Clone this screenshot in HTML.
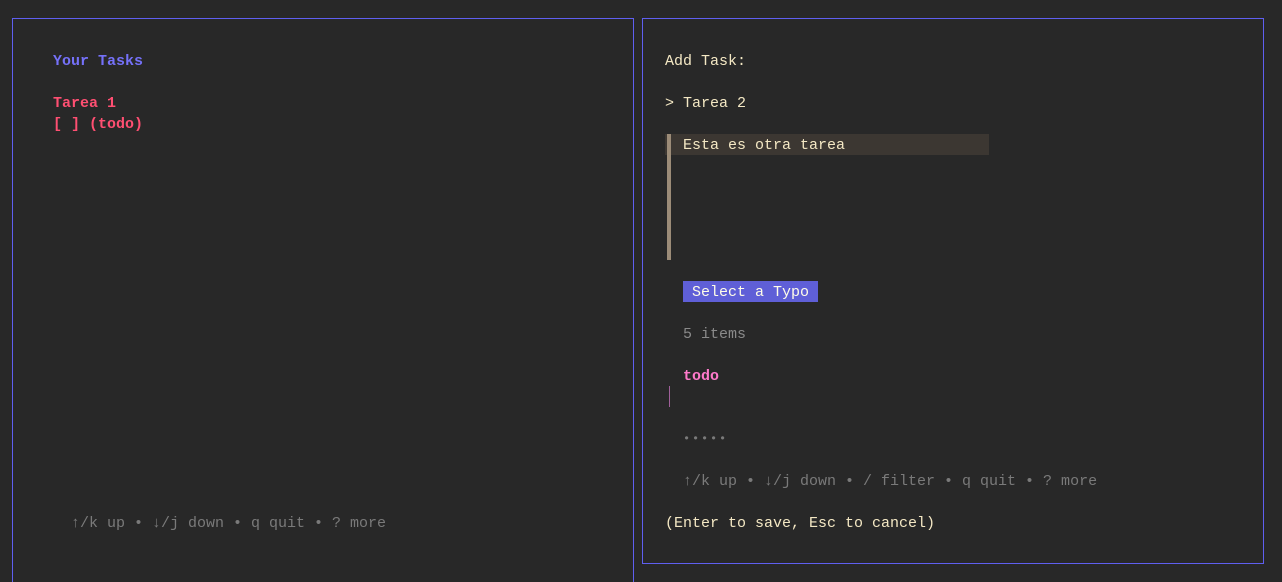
<!DOCTYPE html>
<html><head><meta charset="utf-8"><style>
html,body{margin:0;padding:0;background:#282828;width:1282px;height:582px;overflow:hidden}
body{position:relative;font-family:"Liberation Mono","DejaVu Sans Mono",monospace;font-size:15px}
.box{position:absolute;border:1px solid #5f5ff0;box-sizing:border-box}
.t{position:absolute;white-space:pre;line-height:21px;height:21px}
</style></head><body>
<div class="box" style="left:12px;top:18px;width:622px;height:564px;border-bottom:none"></div>
<div class="box" style="left:642px;top:18px;width:622px;height:546px"></div>

<div class="t" style="left:53px;top:51px;color:#7571f9;font-weight:bold">Your Tasks</div>
<div class="t" style="left:53px;top:93px;color:#ff4f72;font-weight:bold">Tarea 1</div>
<div class="t" style="left:53px;top:114px;color:#ff4f72;font-weight:bold">[ ] (todo)</div>
<div class="t" style="left:71px;top:513px;color:#7a7a7a">↑/k up • ↓/j down • q quit • ? more</div>

<div class="t" style="left:665px;top:51px;color:#f4e8c4">Add Task:</div>
<div class="t" style="left:665px;top:93px;color:#f4e8c4">&gt; Tarea 2</div>
<div style="position:absolute;left:665px;top:134px;width:324px;height:21px;background:#3c3732"></div>
<div style="position:absolute;left:667px;top:134px;width:4px;height:126px;background:#9c8c78"></div>
<div class="t" style="left:683px;top:135px;color:#f4e8c4">Esta es otra tarea</div>
<div style="position:absolute;left:683px;top:281px;width:135px;height:21px;background:#5f5fd7"></div>
<div class="t" style="left:692px;top:282px;color:#fffde8">Select a Typo</div>
<div class="t" style="left:683px;top:324px;color:#8a8a8a">5 items</div>
<div class="t" style="left:683px;top:366px;color:#ff7acb;font-weight:bold">todo</div>
<div style="position:absolute;left:669px;top:386px;width:1px;height:21px;background:#a0609a"></div>
<div class="t" style="left:683px;top:429px;color:#7a7a7a;font-size:12px;letter-spacing:1.8px">•••••</div>
<div class="t" style="left:683px;top:471px;color:#7a7a7a">↑/k up • ↓/j down • / filter • q quit • ? more</div>
<div class="t" style="left:665px;top:513px;color:#f4e8c4">(Enter to save, Esc to cancel)</div>
</body></html>
